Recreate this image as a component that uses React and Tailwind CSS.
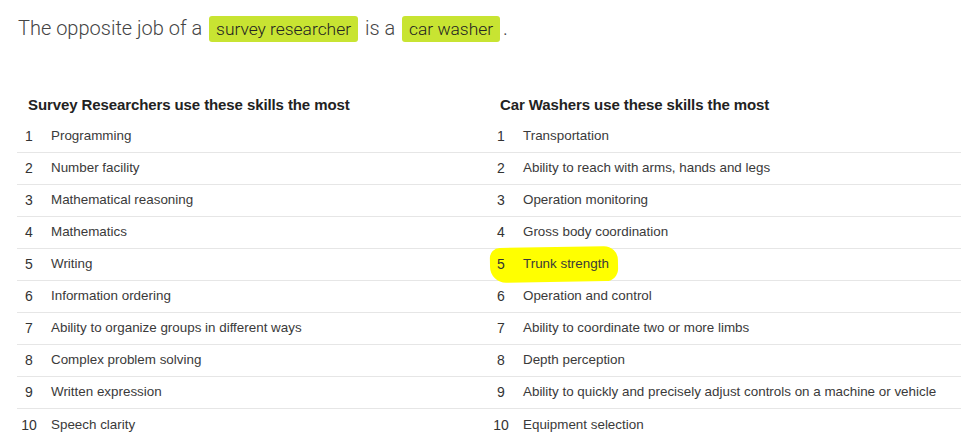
import React from 'react';

const left = [
  'Programming',
  'Number facility',
  'Mathematical reasoning',
  'Mathematics',
  'Writing',
  'Information ordering',
  'Ability to organize groups in different ways',
  'Complex problem solving',
  'Written expression',
  'Speech clarity',
];

const right = [
  'Transportation',
  'Ability to reach with arms, hands and legs',
  'Operation monitoring',
  'Gross body coordination',
  'Trunk strength',
  'Operation and control',
  'Ability to coordinate two or more limbs',
  'Depth perception',
  'Ability to quickly and precisely adjust controls on a machine or vehicle',
  'Equipment selection',
];

const SkillList = ({ title, items, marked }) => (
  <div className="flex flex-col">
    <h3 className="pl-[11px] pt-[4px] h-[36px] flex items-center text-[15px] font-bold text-[#222] tracking-[-0.1px]">
      {title}
    </h3>
    <ol>
      {items.map((item, i) => (
        <li
          key={item}
          className={`relative h-[32px] flex items-center text-[13.4px] text-[#3a3a3a] ${
            i < items.length - 1 ? 'border-b border-[#e6e6e6]' : ''
          }`}
        >
          {marked === i && (
            <span className="absolute left-[1px] top-[-2px] w-[128px] h-[35px] bg-[#ffff00] rounded-[10px_14px_12px_16px] -rotate-1" />
          )}
          <span className="relative w-[24px] text-center text-[#333] text-[14px]">{i + 1}</span>
          <span className="relative pl-[10px]">{item}</span>
        </li>
      ))}
    </ol>
  </div>
);

const Tag = ({ children }) => (
  <span className="inline-block mx-[2px] bg-[#c8e432] text-[#222] rounded-[3px] px-[7px] leading-[26px] text-[17.4px]">
    {children}
  </span>
);

export default function App() {
  return (
    <div className="w-[961px] h-[444px] bg-white font-['Liberation_Sans',sans-serif] overflow-hidden">
      <p className="pl-[18px] pt-[15px] h-[85px] text-[20px] leading-[26px] font-light text-[#444] font-['Roboto',sans-serif]">
        The opposite job of a <Tag>survey researcher</Tag> is a <Tag>car washer</Tag>
        <span className="ml-[1px]">.</span>
      </p>
      <div className="grid grid-cols-[472px_472px] pl-[17px]">
        <SkillList title="Survey Researchers use these skills the most" items={left} />
        <SkillList title="Car Washers use these skills the most" items={right} marked={4} />
      </div>
    </div>
  );
}
